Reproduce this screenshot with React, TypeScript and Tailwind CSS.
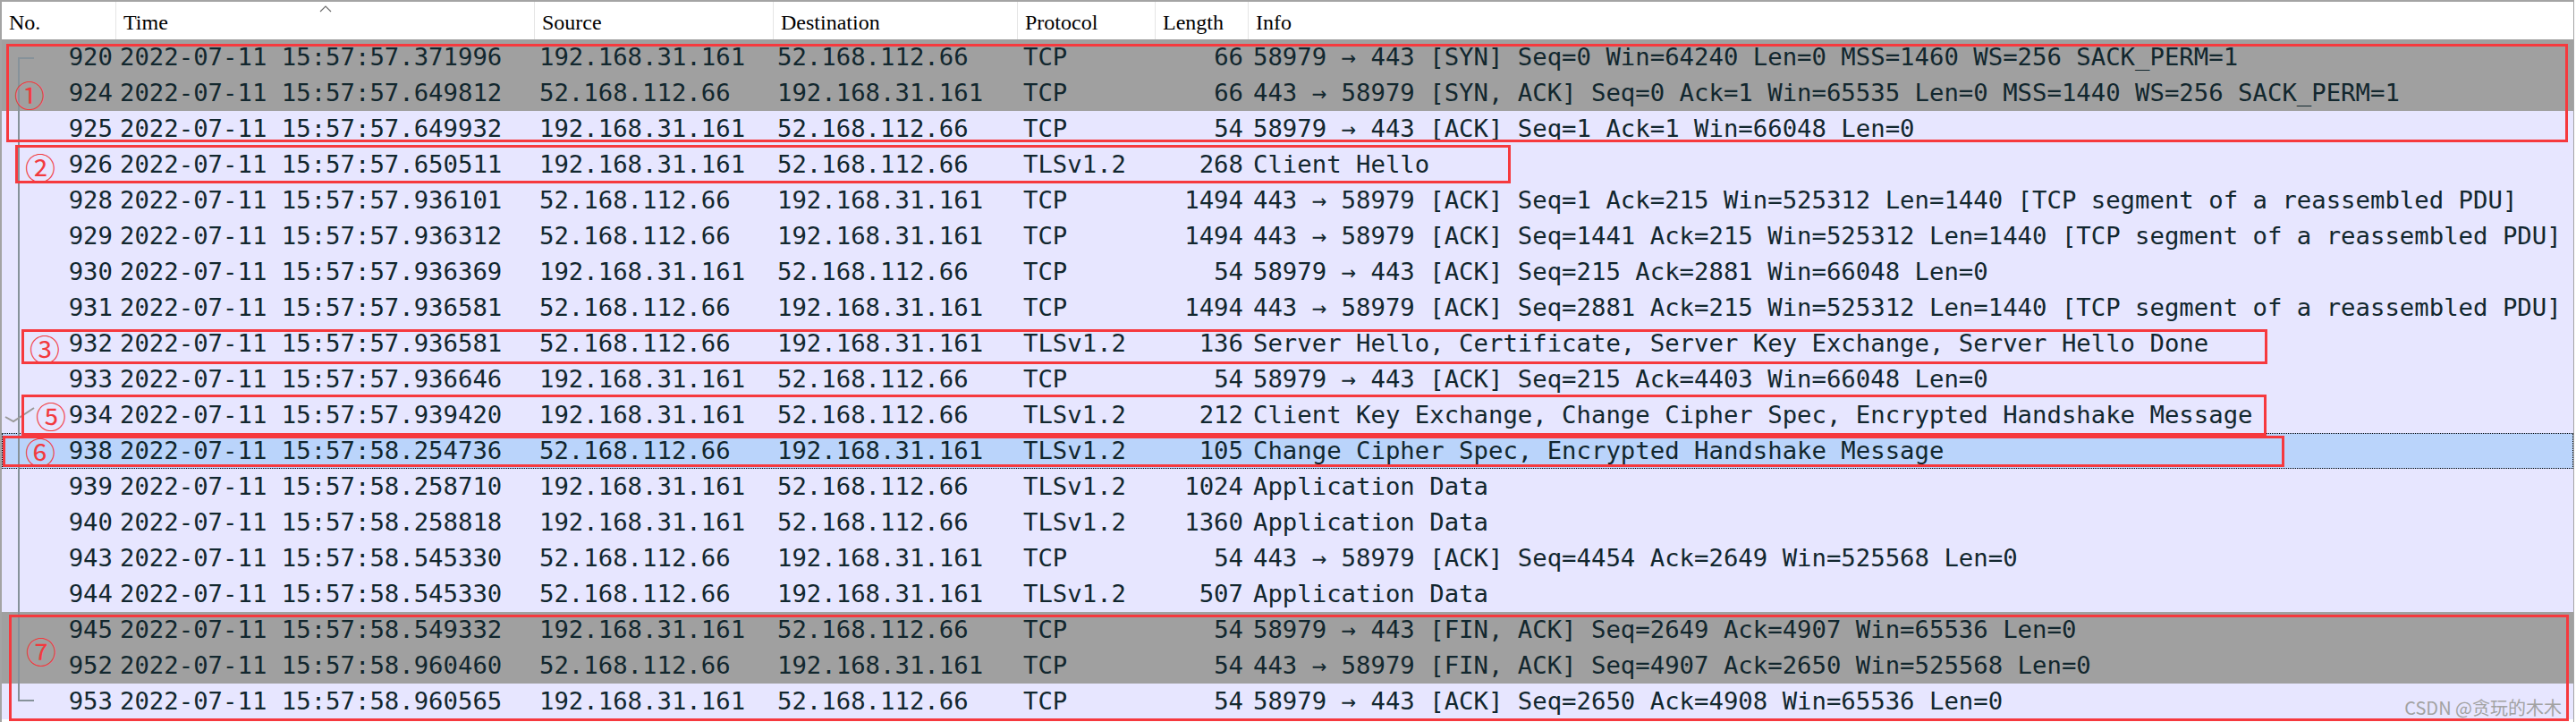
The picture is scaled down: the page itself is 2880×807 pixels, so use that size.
import React from "react";

type Row = {
  no: string;
  time: string;
  src: string;
  dst: string;
  proto: string;
  len: string;
  info: string;
  kind?: "flag" | "sel";
  tree: "first" | "mid" | "last" | "check";
};

const A = "192.168.31.161";
const B = "52.168.112.66";

const rows: Row[] = [
  { no: "920", time: "2022-07-11 15:57:57.371996", src: A, dst: B, proto: "TCP", len: "66", info: "58979 → 443 [SYN] Seq=0 Win=64240 Len=0 MSS=1460 WS=256 SACK_PERM=1", kind: "flag", tree: "first" },
  { no: "924", time: "2022-07-11 15:57:57.649812", src: B, dst: A, proto: "TCP", len: "66", info: "443 → 58979 [SYN, ACK] Seq=0 Ack=1 Win=65535 Len=0 MSS=1440 WS=256 SACK_PERM=1", kind: "flag", tree: "mid" },
  { no: "925", time: "2022-07-11 15:57:57.649932", src: A, dst: B, proto: "TCP", len: "54", info: "58979 → 443 [ACK] Seq=1 Ack=1 Win=66048 Len=0", tree: "mid" },
  { no: "926", time: "2022-07-11 15:57:57.650511", src: A, dst: B, proto: "TLSv1.2", len: "268", info: "Client Hello", tree: "mid" },
  { no: "928", time: "2022-07-11 15:57:57.936101", src: B, dst: A, proto: "TCP", len: "1494", info: "443 → 58979 [ACK] Seq=1 Ack=215 Win=525312 Len=1440 [TCP segment of a reassembled PDU]", tree: "mid" },
  { no: "929", time: "2022-07-11 15:57:57.936312", src: B, dst: A, proto: "TCP", len: "1494", info: "443 → 58979 [ACK] Seq=1441 Ack=215 Win=525312 Len=1440 [TCP segment of a reassembled PDU]", tree: "mid" },
  { no: "930", time: "2022-07-11 15:57:57.936369", src: A, dst: B, proto: "TCP", len: "54", info: "58979 → 443 [ACK] Seq=215 Ack=2881 Win=66048 Len=0", tree: "mid" },
  { no: "931", time: "2022-07-11 15:57:57.936581", src: B, dst: A, proto: "TCP", len: "1494", info: "443 → 58979 [ACK] Seq=2881 Ack=215 Win=525312 Len=1440 [TCP segment of a reassembled PDU]", tree: "mid" },
  { no: "932", time: "2022-07-11 15:57:57.936581", src: B, dst: A, proto: "TLSv1.2", len: "136", info: "Server Hello, Certificate, Server Key Exchange, Server Hello Done", tree: "mid" },
  { no: "933", time: "2022-07-11 15:57:57.936646", src: A, dst: B, proto: "TCP", len: "54", info: "58979 → 443 [ACK] Seq=215 Ack=4403 Win=66048 Len=0", tree: "mid" },
  { no: "934", time: "2022-07-11 15:57:57.939420", src: A, dst: B, proto: "TLSv1.2", len: "212", info: "Client Key Exchange, Change Cipher Spec, Encrypted Handshake Message", tree: "check" },
  { no: "938", time: "2022-07-11 15:57:58.254736", src: B, dst: A, proto: "TLSv1.2", len: "105", info: "Change Cipher Spec, Encrypted Handshake Message", kind: "sel", tree: "mid" },
  { no: "939", time: "2022-07-11 15:57:58.258710", src: A, dst: B, proto: "TLSv1.2", len: "1024", info: "Application Data", tree: "mid" },
  { no: "940", time: "2022-07-11 15:57:58.258818", src: A, dst: B, proto: "TLSv1.2", len: "1360", info: "Application Data", tree: "mid" },
  { no: "943", time: "2022-07-11 15:57:58.545330", src: B, dst: A, proto: "TCP", len: "54", info: "443 → 58979 [ACK] Seq=4454 Ack=2649 Win=525568 Len=0", tree: "mid" },
  { no: "944", time: "2022-07-11 15:57:58.545330", src: B, dst: A, proto: "TLSv1.2", len: "507", info: "Application Data", tree: "mid" },
  { no: "945", time: "2022-07-11 15:57:58.549332", src: A, dst: B, proto: "TCP", len: "54", info: "58979 → 443 [FIN, ACK] Seq=2649 Ack=4907 Win=65536 Len=0", kind: "flag", tree: "mid" },
  { no: "952", time: "2022-07-11 15:57:58.960460", src: B, dst: A, proto: "TCP", len: "54", info: "443 → 58979 [FIN, ACK] Seq=4907 Ack=2650 Win=525568 Len=0", kind: "flag", tree: "mid" },
  { no: "953", time: "2022-07-11 15:57:58.960565", src: A, dst: B, proto: "TCP", len: "54", info: "58979 → 443 [ACK] Seq=2650 Ack=4908 Win=65536 Len=0", tree: "last" },
];

// related-packet markers drawn in the No. column
function Tree({ kind }: { kind: Row["tree"] }) {
  return (
    <>
      {kind === "first" && (
        <>
          <span className="absolute left-[18px] top-[20px] bottom-0 w-[2px] bg-[#86929a]" />
          <span className="absolute left-[18px] top-[20px] w-[18px] h-[2px] bg-[#86929a]" />
        </>
      )}
      {(kind === "mid" || kind === "check") && (
        <span className="absolute left-[18px] top-0 bottom-0 w-[2px] bg-[#86929a]" />
      )}
      {kind === "last" && (
        <>
          <span className="absolute left-[18px] top-0 h-[20px] w-[2px] bg-[#86929a]" />
          <span className="absolute left-[18px] top-[18px] w-[18px] h-[2px] bg-[#86929a]" />
        </>
      )}
      {kind === "check" && (
        <svg className="absolute left-0 top-0" width="40" height="40" viewBox="0 0 40 40">
          <polyline points="4,22 13,27 36,12" fill="none" stroke="#9a9a9a" strokeWidth="2" />
        </svg>
      )}
    </>
  );
}

function PacketRow({ r }: { r: Row }) {
  const bg =
    r.kind === "flag"
      ? "bg-[#a0a0a0]"
      : r.kind === "sel"
      ? "bg-[#bad4fb] outline-1 outline-dotted outline-black -outline-offset-1"
      : "bg-[#e7e6ff]";
  return (
    <div className={`flex h-[40px] leading-[40px] whitespace-nowrap ${bg}`}>
      <div className="relative w-[124px] shrink-0 text-right">
        <Tree kind={r.tree} />
        <span className="relative">{r.no}</span>
      </div>
      <div className="w-[471px] shrink-0 pl-[8px]">{r.time}</div>
      <div className="w-[267px] shrink-0 pl-[6px]">{r.src}</div>
      <div className="w-[273px] shrink-0 pl-[5px]">{r.dst}</div>
      <div className="w-[154px] shrink-0 pl-[7px]">{r.proto}</div>
      <div className="w-[104px] shrink-0 pr-[5px] text-right">{r.len}</div>
      <div className="flex-1 min-w-0 overflow-hidden pl-[6px]">{r.info}</div>
    </div>
  );
}

function Header() {
  const cell = "h-[42px] pt-[4px] leading-[38px] pl-[8px] shrink-0";
  return (
    <div className="flex bg-white text-black font-['Liberation_Serif',serif] text-[24px]">
      <div className={`${cell} w-[127px]`}>No.</div>
      <div className={`${cell} relative w-[468px] border-l border-[#e5e5e5]`}>
        <svg className="absolute left-1/2 top-[4px] -translate-x-1/2" width="14" height="8" viewBox="0 0 14 8">
          <polyline points="1,7 7,1 13,7" fill="none" stroke="#6e6e6e" strokeWidth="1.2" />
        </svg>
        Time
      </div>
      <div className={`${cell} w-[267px] border-l border-[#e5e5e5]`}>Source</div>
      <div className={`${cell} w-[273px] border-l border-[#e5e5e5] pl-[6px]`}>Destination</div>
      <div className={`${cell} w-[154px] border-l border-[#e5e5e5]`}>Protocol</div>
      <div className={`${cell} w-[104px] border-l border-[#e5e5e5]`}>Length</div>
      <div className={`${cell} flex-1 border-l border-[#e5e5e5]`}>Info</div>
    </div>
  );
}

const circled = "absolute w-[40px] h-[40px] flex items-center justify-center text-[34px] leading-none text-[#f23a3e] font-['Noto_Sans_CJK_SC',sans-serif]";
const box = "absolute border-[3px] border-[#f6393e]";

export default function App() {
  return (
    <div className="relative w-[2880px] h-[807px] overflow-hidden bg-white">
      <div className="h-full mr-[2px] border-t-2 border-l-2 border-r border-[#a4a4a4] flex flex-col">
        <Header />
        <div className="font-['DejaVu_Sans_Mono',monospace] text-[27.3px] text-[#12272e]">
          {rows.map((r) => (
            <PacketRow key={r.no} r={r} />
          ))}
        </div>
      </div>

      {/* red annotation boxes drawn over the list */}
      <div className={`${box} left-[7px] top-[49px] w-[2864px] h-[110px]`} />
      <div className={`${box} left-[17px] top-[162px] w-[1672px] h-[43px]`} />
      <div className={`${box} left-[24px] top-[368px] w-[2511px] h-[39px]`} />
      <div className={`${box} left-[24px] top-[441px] w-[2510px] h-[46px]`} />
      <div className={`${box} left-[3px] top-[487px] w-[2551px] h-[35px]`} />
      <div className={`${box} left-[10px] top-[687px] w-[2862px] h-[119px]`} />

      <span className={`${circled} left-[13px] top-[86px]`}>①</span>
      <span className={`${circled} left-[25px] top-[167px]`}>②</span>
      <span className={`${circled} left-[30px] top-[370px]`}>③</span>
      <span className={`${circled} left-[37px] top-[445px]`}>⑤</span>
      <span className={`${circled} left-[25px] top-[485px]`}>⑥</span>
      <span className={`${circled} left-[26px] top-[708px]`}>⑦</span>

      <span className="absolute right-[16px] bottom-[6px] text-[20px] leading-none text-[#a2a2a2] font-['Noto_Sans_CJK_SC',sans-serif]">
        CSDN @贪玩的木木
      </span>
    </div>
  );
}
